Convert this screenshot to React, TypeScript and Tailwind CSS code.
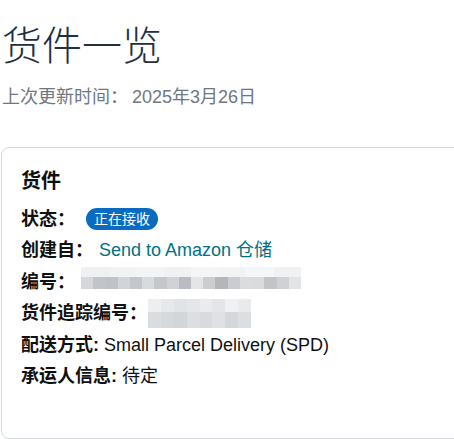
import { FC, ReactNode } from "react"

const cjk = "font-['Liberation_Sans','Noto_Sans_CJK_SC',sans-serif]"

// blurred (mosaic) placeholders for hidden values
const idTop = ["bg-[#eef0f1]", "bg-[#f1f2f3]", "bg-[#f3f4f5]", "bg-[#f0f1f2]", "bg-[#f4f5f6]", "bg-[#f2f3f4]", "bg-[#f5f6f7]", "bg-[#eff1f2]"]
const idBottom = [
  "bg-[#d5d8db]", "bg-[#c1c4c8]", "bg-[#bfc2c6]", "bg-[#d2d5d8]", "bg-[#c3c6ca]", "bg-[#d8dbde]",
  "bg-[#c5c8cb]", "bg-[#d0d2d5]", "bg-[#b9bcc3]", "bg-[#e3e6e8]", "bg-[#cbcdcf]", "bg-[#b4b6ba]",
  "bg-[#c9ccd0]", "bg-[#dadcde]", "bg-[#d9dbdd]", "bg-[#c2c4c7]", "bg-[#cfd1d4]", "bg-[#e2e4e6]",
]
const trackTop = ["bg-[#eceef0]", "bg-[#e6e8ea]", "bg-[#e1e4e7]", "bg-[#e4e6e9]", "bg-[#e9ebed]", "bg-[#e3e5e8]", "bg-[#eef0f1]", "bg-[#e8eaec]"]
const trackBottom = ["bg-[#dadde0]", "bg-[#d6d9dc]", "bg-[#d2d5d9]", "bg-[#dcdee1]", "bg-[#d8dadd]", "bg-[#dfe1e3]", "bg-[#d5d8db]", "bg-[#dcdfe2]"]

const Mosaic: FC<{ top: string[]; bottom: string[]; topH: string; bottomH: string }> = ({ top, bottom, topH, bottomH }) => (
  <div className="flex flex-col">
    <div className="flex">
      {top.map((c, i) => (
        <div key={i} className={`${c} ${topH} w-[12px] flex-1`} />
      ))}
    </div>
    <div className="flex">
      {bottom.map((c, i) => (
        <div key={i} className={`${c} ${bottomH} w-[12px] flex-1`} />
      ))}
    </div>
  </div>
)

const Row: FC<{ label: string; gap: string; children: ReactNode }> = ({ label, gap, children }) => (
  <div className="flex items-center h-[24px]">
    <span className="font-bold text-[18px] text-[#0f1111]">{label}</span>
    <div className={`flex items-center ${gap}`}>{children}</div>
  </div>
)

export default function App() {
  return (
    <div className={`w-[454px] h-[439px] overflow-hidden bg-white ${cjk}`}>
      <h1 className="pt-[22px] pl-[2px] text-[40px] leading-[48px] font-light text-[#232f3e]">货件一览</h1>
      <p className="mt-[16px] pl-[2px] text-[18px] leading-[22px] text-[#6f7780]">
        上次更新时间：<span className="ml-[4px]">2025年3月26日</span>
      </p>
      <div className="mt-[39px] ml-px w-[480px] h-[292px] border border-[#d5d9d9] rounded-[8px] pl-[19px] pt-[21px]">
        <h2 className="text-[20px] leading-[24px] font-bold text-[#0f1111]">货件</h2>
        <div className="mt-[14px] flex flex-col gap-[7.6px]">
          <Row label="状态：" gap="ml-[11px]">
            <span className="rounded-full bg-[#0a6cc0] text-white text-[14px] leading-[22px] px-[8px]">正在接收</span>
          </Row>
          <Row label="创建自：" gap="ml-[6px]">
            <span className="text-[18px] text-[#007185]">Send to Amazon 仓储</span>
          </Row>
          <Row label="编号：" gap="ml-[6px] w-[220px] mb-[8px]">
            <div className="w-full">
              <Mosaic top={idTop} bottom={idBottom} topH="h-[10px]" bottomH="h-[12px]" />
            </div>
          </Row>
          <Row label="货件追踪编号：" gap="ml-[1px] w-[103px]">
            <div className="w-full">
              <Mosaic top={trackTop} bottom={trackBottom} topH="h-[13px]" bottomH="h-[16px]" />
            </div>
          </Row>
          <Row label="配送方式:" gap="ml-[5px]">
            <span className="text-[18px] text-[#0f1111]">Small Parcel Delivery (SPD)</span>
          </Row>
          <Row label="承运人信息:" gap="ml-[5px]">
            <span className="text-[18px] text-[#0f1111]">待定</span>
          </Row>
        </div>
      </div>
    </div>
  )
}
